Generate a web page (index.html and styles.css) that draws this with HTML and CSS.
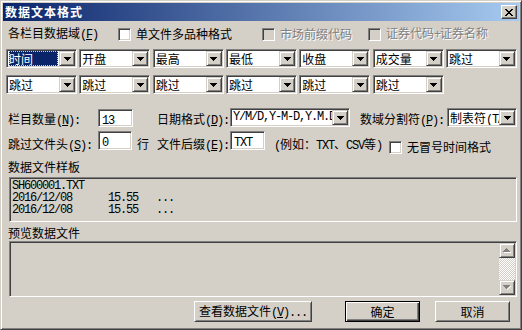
FILE: index.html
```html
<!DOCTYPE html>
<html>
<head>
<meta charset="utf-8">
<link rel="stylesheet" href="styles.css">
</head>
<body>
<div class="win">
  <div class="title">
    <span class="ttext">数据文本格式</span>
    <span class="close"><svg width="8" height="7" viewBox="0 0 8 7" shape-rendering="crispEdges"><path fill="#000" d="M0 0h2v1H0zM6 0h2v1H6zM1 1h2v1H1zM5 1h2v1H5zM2 2h4v1H2zM3 3h2v1H3zM2 4h4v1H2zM1 5h2v1H1zM5 5h2v1H5zM0 6h2v1H0zM6 6h2v1H6z"/></svg></span>
  </div>
  <div class="client">
    <div class="r1">
      <span class="lab1">各栏目数据域<span class="l">(<u>F</u>)</span></span>
      <span class="chk w144"><span class="box"></span><span>单文件多品种格式</span></span>
      <span class="chk w106 dis"><span class="box"></span><span>市场前缀代码</span></span>
      <span class="chk dis"><span class="box"></span><span>证券代码<span class="l">+</span>证券名称</span></span>
    </div>
    <div class="combos">
      <div class="combo"><span class="v"><span class="sel">时间</span></span><span class="dd"><svg width="7" height="4" viewBox="0 0 7 4" shape-rendering="crispEdges"><path d="M0 0h7v1H0zM1 1h5v1H1zM2 2h3v1H2zM3 3h1v1H3z"/></svg></span></div>
      <div class="combo"><span class="v">开盘</span><span class="dd"><svg width="7" height="4" viewBox="0 0 7 4" shape-rendering="crispEdges"><path d="M0 0h7v1H0zM1 1h5v1H1zM2 2h3v1H2zM3 3h1v1H3z"/></svg></span></div>
      <div class="combo"><span class="v">最高</span><span class="dd"><svg width="7" height="4" viewBox="0 0 7 4" shape-rendering="crispEdges"><path d="M0 0h7v1H0zM1 1h5v1H1zM2 2h3v1H2zM3 3h1v1H3z"/></svg></span></div>
      <div class="combo"><span class="v">最低</span><span class="dd"><svg width="7" height="4" viewBox="0 0 7 4" shape-rendering="crispEdges"><path d="M0 0h7v1H0zM1 1h5v1H1zM2 2h3v1H2zM3 3h1v1H3z"/></svg></span></div>
      <div class="combo"><span class="v">收盘</span><span class="dd"><svg width="7" height="4" viewBox="0 0 7 4" shape-rendering="crispEdges"><path d="M0 0h7v1H0zM1 1h5v1H1zM2 2h3v1H2zM3 3h1v1H3z"/></svg></span></div>
      <div class="combo"><span class="v">成交量</span><span class="dd"><svg width="7" height="4" viewBox="0 0 7 4" shape-rendering="crispEdges"><path d="M0 0h7v1H0zM1 1h5v1H1zM2 2h3v1H2zM3 3h1v1H3z"/></svg></span></div>
      <div class="combo"><span class="v">跳过</span><span class="dd"><svg width="7" height="4" viewBox="0 0 7 4" shape-rendering="crispEdges"><path d="M0 0h7v1H0zM1 1h5v1H1zM2 2h3v1H2zM3 3h1v1H3z"/></svg></span></div>
    </div>
    <div class="combos">
      <div class="combo"><span class="v">跳过</span><span class="dd"><svg width="7" height="4" viewBox="0 0 7 4" shape-rendering="crispEdges"><path d="M0 0h7v1H0zM1 1h5v1H1zM2 2h3v1H2zM3 3h1v1H3z"/></svg></span></div>
      <div class="combo"><span class="v">跳过</span><span class="dd"><svg width="7" height="4" viewBox="0 0 7 4" shape-rendering="crispEdges"><path d="M0 0h7v1H0zM1 1h5v1H1zM2 2h3v1H2zM3 3h1v1H3z"/></svg></span></div>
      <div class="combo"><span class="v">跳过</span><span class="dd"><svg width="7" height="4" viewBox="0 0 7 4" shape-rendering="crispEdges"><path d="M0 0h7v1H0zM1 1h5v1H1zM2 2h3v1H2zM3 3h1v1H3z"/></svg></span></div>
      <div class="combo"><span class="v">跳过</span><span class="dd"><svg width="7" height="4" viewBox="0 0 7 4" shape-rendering="crispEdges"><path d="M0 0h7v1H0zM1 1h5v1H1zM2 2h3v1H2zM3 3h1v1H3z"/></svg></span></div>
      <div class="combo"><span class="v">跳过</span><span class="dd"><svg width="7" height="4" viewBox="0 0 7 4" shape-rendering="crispEdges"><path d="M0 0h7v1H0zM1 1h5v1H1zM2 2h3v1H2zM3 3h1v1H3z"/></svg></span></div>
      <div class="combo"><span class="v">跳过</span><span class="dd"><svg width="7" height="4" viewBox="0 0 7 4" shape-rendering="crispEdges"><path d="M0 0h7v1H0zM1 1h5v1H1zM2 2h3v1H2zM3 3h1v1H3z"/></svg></span></div>
    </div>
    <div class="r3">
      <span class="t lab95">栏目数量<span class="l">(<u>N</u>):</span></span>
      <span class="edit w35 e1"><span class="l">13</span></span>
      <span class="sp24"></span>
      <span class="t w73">日期格式<span class="l">(<u>D</u>):</span></span>
      <div class="combo w120"><span class="v l">Y/M/D,Y-M-D,Y.M.D</span><span class="dd"><svg width="7" height="4" viewBox="0 0 7 4" shape-rendering="crispEdges"><path d="M0 0h7v1H0zM1 1h5v1H1zM2 2h3v1H2zM3 3h1v1H3z"/></svg></span></div>
      <span class="t lab97">数域分割符<span class="l">(<u>P</u>):</span></span>
      <div class="combo w70"><span class="v">制表符<span class="l">(TAB)</span></span><span class="dd"><svg width="7" height="4" viewBox="0 0 7 4" shape-rendering="crispEdges"><path d="M0 0h7v1H0zM1 1h5v1H1zM2 2h3v1H2zM3 3h1v1H3z"/></svg></span></div>
    </div>
    <div class="r4">
      <span class="t lab95">跳过文件头<span class="l">(<u>S</u>):</span></span>
      <span class="edit w34"><span class="l">0</span></span>
      <span class="t hang">行</span>
      <span class="t w73">文件后缀<span class="l">(<u>E</u>):</span></span>
      <span class="edit w35"><span class="l">TXT</span></span>
      <span class="t eg"><span class="l">(</span>例如：<span class="l">TXT</span>、<span class="l">CSV</span>等<span class="l">)</span></span>
      <span class="chk c4"><span class="box"></span><span>无冒号时间格式</span></span>
    </div>
    <div class="lab">数据文件样板</div>
    <div class="sample"><pre class="l">SH600001.TXT
2016/12/08      15.55   ...
2016/12/08      15.55   ...</pre></div>
    <div class="lab lab2">预览数据文件</div>
    <div class="preview">
      <div class="pv"></div>
      <div class="sb">
        <span class="sbb"><svg width="8" height="5" viewBox="0 0 8 5" shape-rendering="crispEdges"><path fill="#fff" d="M4 1h1v1H4zM5 2h1v1H5zM6 3h1v1H6zM1 4h7v1H1z"/><path fill="#808080" d="M3 0h1v1H3zM2 1h3v1H2zM1 2h5v1H1zM0 3h7v1H0z"/></svg></span>
        <span class="track"></span>
        <span class="sbb"><svg width="8" height="5" viewBox="0 0 8 5" shape-rendering="crispEdges"><path fill="#fff" d="M7 1h1v1H7zM6 2h1v1H6zM5 3h1v1H5zM4 4h1v1H4z"/><path fill="#808080" d="M0 0h7v1H0zM1 1h5v1H1zM2 2h3v1H2zM3 3h1v1H3z"/></svg></span>
      </div>
    </div>
    <div class="btns">
      <span class="btn bview"><span>查看数据文件<span class="l">(<u>V</u>)...</span></span></span>
      <span class="btn bok">确定</span>
      <span class="btn bcancel">取消</span>
    </div>
  </div>
</div>
</body>
</html>
```
FILE: styles.css
```css
* { box-sizing: border-box; }
body { margin: 0; font-family: "Noto Sans CJK SC", sans-serif; font-size: 12px; color: #000; line-height: 16px; }
.l { font-family: "Liberation Mono", monospace; font-size: 12px; letter-spacing: -1.2px; }
u { text-decoration: underline; }

.win {
  width: 522px; height: 330px; background: #d4d0c8;
  border: 1px solid; border-color: #d4d0c8 #404040 #404040 #d4d0c8;
  box-shadow: inset 1px 1px #fff, inset -1px -1px #808080;
  padding: 2px; display: flex; flex-direction: column;
}
.title {
  height: 18px; flex: none;
  background: linear-gradient(to right, #0a246a, #a6caf0);
  display: flex; align-items: center; justify-content: space-between;
  padding: 0 2px;
}
.ttext { color: #fff; font-weight: bold; letter-spacing: 1px; line-height: 16px; }
.close {
  width: 16px; height: 14px; background: #d4d0c8;
  border: 1px solid; border-color: #fff #404040 #404040 #fff;
  box-shadow: inset -1px -1px #808080;
  display: flex; align-items: center; justify-content: center;
  padding-right: 1px;
}
.client { flex: 1; display: flex; flex-direction: column; }

.r1 { display: flex; align-items: center; height: 16px; margin-top: 5px; }
.lab1 { margin-left: 5px; width: 110px; }
.chk { display: flex; align-items: center; gap: 5px; white-space: nowrap; }
.w144 { width: 144px; }
.w106 { width: 106px; }
.box {
  width: 13px; height: 13px; background: #fff; flex: none;
  border: 1px solid; border-color: #808080 #fff #fff #808080;
  box-shadow: inset 1px 1px #404040, inset -1px -1px #d4d0c8;
}
.dis { color: #808080; text-shadow: 1px 1px #fff; }
.dis .box { background: #d4d0c8; }

.combos {
  display: grid; grid-template-columns: repeat(7, 1fr); column-gap: 2.33px;
  margin-left: 3px; width: 511px; margin-top: 7px;
}
.combo {
  height: 19px; display: flex; background: #fff;
  border: 1px solid; border-color: #808080 #fff #fff #808080;
  box-shadow: inset 1px 1px #404040, inset -1px -1px #d4d0c8;
  padding: 1px; flex: none;
}
.v { flex: 1; min-width: 0; overflow: hidden; white-space: nowrap; line-height: 15px; padding-left: 1px; }
.sel {
  display: block; background: #0a246a; color: #fff; height: 15px; line-height: 15px;
  margin: 0 1px 0 0; outline: 1px dotted #d8d890; outline-offset: -1px;
}
.dd {
  width: 16px; height: 15px; flex: none; background: #d4d0c8;
  border: 1px solid; border-color: #d4d0c8 #404040 #404040 #d4d0c8;
  box-shadow: inset 1px 1px #fff, inset -1px -1px #808080;
  display: flex; align-items: center; justify-content: center;
}
.dd svg { fill: #000; }

.r3 { display: flex; align-items: flex-start; height: 19px; margin-top: 14px; }
.r4 { display: flex; align-items: flex-start; height: 21px; margin-top: 4px; }
.t { white-space: nowrap; margin-top: 3px; }
.r4 .t { margin-top: 5px; }
.lab95 { width: 95px; padding-left: 5px; }
.lab97 { width: 97px; padding-left: 10px; }
.w73 { width: 73px; }
.w120 { width: 120px; }
.w70 { width: 70px; }
.w35 { width: 35px; }
.w34 { width: 34px; }
.sp24 { width: 24px; }
.hang { width: 25px; padding-left: 5px; }
.eg { width: 124px; padding-left: 9px; }
.c4 { margin-top: 8px; }
.edit {
  height: 19px; background: #fff; flex: none;
  border: 1px solid; border-color: #808080 #fff #fff #808080;
  box-shadow: inset 1px 1px #404040, inset -1px -1px #d4d0c8;
  padding: 1px 0 0 3px; line-height: 15px; overflow: hidden; white-space: nowrap;
}
.e1 { height: 18px; margin-top: 1px; }

.lab { height: 16px; padding-left: 5px; margin-top: 7px; }
.lab2 { margin-top: 3px; }
.sample {
  margin-left: 6px; width: 508px; height: 45px; flex: none;
  border: 1px solid; border-color: #808080 #fff #fff #808080;
  box-shadow: inset 1px 1px #404040, inset -1px -1px #d4d0c8;
  margin-top: 2px; padding: 2px 0 0 2px; overflow: hidden;
}
.sample pre { margin: 0; line-height: 12px; white-space: pre; }
.preview {
  margin-left: 6px; width: 508px; height: 56px; flex: none;
  border: 1px solid; border-color: #808080 #fff #fff #808080;
  box-shadow: inset 1px 1px #404040, inset -1px -1px #d4d0c8;
  padding: 1px; display: flex;
}
.pv { flex: 1; }
.sb { width: 16px; display: flex; flex-direction: column; }
.sbb {
  height: 15px; flex: none; background: #d4d0c8;
  border: 1px solid; border-color: #d4d0c8 #404040 #404040 #d4d0c8;
  box-shadow: inset 1px 1px #fff, inset -1px -1px #808080;
  display: flex; align-items: center; justify-content: center;
}
.track {
  flex: 1;
  background-image: conic-gradient(#fff 25%, #d4d0c8 0 50%, #fff 0 75%, #d4d0c8 0);
  background-size: 2px 2px;
}

.btns { display: flex; margin-top: 4px; height: 21px; }
.btn {
  height: 21px; background: #d4d0c8;
  border: 1px solid; border-color: #fff #404040 #404040 #fff;
  box-shadow: inset 1px 1px #d4d0c8, inset -1px -1px #808080;
  display: flex; align-items: center; justify-content: center; white-space: nowrap;
}
.bview { margin-left: 191px; width: 118px; }
.bok {
  margin-left: 33px; width: 75px; border-color: #000;
  box-shadow: inset 1px 1px #fff, inset -1px -1px #404040, inset -2px -2px #808080;
}
.bcancel { margin-left: 15px; width: 75px; }
```
